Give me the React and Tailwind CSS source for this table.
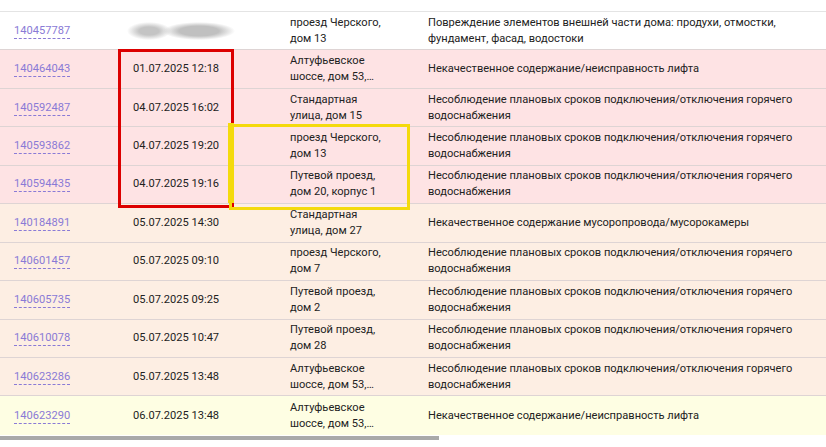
import React from "react";

const PINK = "bg-[#fee3e4]";
const PEACH = "bg-[#fdeee3]";
const LY = "bg-[#fefee3]";

const NS = ["Несоблюдение плановых сроков подключения/отключения горячего", "водоснабжения"];
const LIFT = ["Некачественное содержание/неисправность лифта"];

const rows = [
  { id: "140457787", date: null, addr: ["проезд Черского,", "дом 13"], desc: ["Повреждение элементов внешней части дома: продухи, отмостки,", "фундамент, фасад, водостоки"], bg: "bg-white" },
  { id: "140464043", date: "01.07.2025 12:18", addr: ["Алтуфьевское", "шоссе, дом 53,…"], desc: LIFT, bg: PINK },
  { id: "140592487", date: "04.07.2025 16:02", addr: ["Стандартная", "улица, дом 15"], desc: NS, bg: PINK },
  { id: "140593862", date: "04.07.2025 19:20", addr: ["проезд Черского,", "дом 13"], desc: NS, bg: PINK },
  { id: "140594435", date: "04.07.2025 19:16", addr: ["Путевой проезд,", "дом 20, корпус 1"], desc: NS, bg: PINK },
  { id: "140184891", date: "05.07.2025 14:30", addr: ["Стандартная", "улица, дом 27"], desc: ["Некачественное содержание мусоропровода/мусорокамеры"], bg: PEACH },
  { id: "140601457", date: "05.07.2025 09:10", addr: ["проезд Черского,", "дом 7"], desc: NS, bg: PEACH },
  { id: "140605735", date: "05.07.2025 09:25", addr: ["Путевой проезд,", "дом 2"], desc: NS, bg: PEACH },
  { id: "140610078", date: "05.07.2025 10:47", addr: ["Путевой проезд,", "дом 28"], desc: NS, bg: PEACH },
  { id: "140623286", date: "05.07.2025 13:48", addr: ["Алтуфьевское", "шоссе, дом 53,…"], desc: NS, bg: PEACH },
  { id: "140623290", date: "06.07.2025 13:48", addr: ["Алтуфьевское", "шоссе, дом 53,…"], desc: LIFT, bg: LY },
];

function Lines({ lines }) {
  return (
    <div className="flex flex-col">
      {lines.map((l, i) => (
        <span key={i} className="block whitespace-nowrap">{l}</span>
      ))}
    </div>
  );
}

export default function App() {
  return (
    <div
      className="relative w-[826px] h-[447px] overflow-hidden bg-white text-[11.1px] leading-[16px] text-[#222222]"
      style={{ fontFamily: "Roboto, 'Noto Sans', sans-serif" }}
    >
      <div className="h-[12px] border-b border-[#e4e4e4]" />
      {rows.map((r, i) => (
        <div
          key={r.id}
          className={`grid grid-cols-[119px_157px_138px_1fr] items-center h-[38.45px] ${r.bg} ${i < rows.length - 1 ? "border-b border-[#ded4d4]" : ""}`}
        >
          <div className="pl-[14px]">
            <span className="text-[#8a7ad6] border-b border-dashed border-[#8a7ad6] leading-[14px] inline-block">{r.id}</span>
          </div>
          <div className="pl-[14px]">
            {r.date ? (
              r.date
            ) : (
              <div className="ml-[-6px] flex items-center">
                <div className="h-[18px] w-[44px] bg-[radial-gradient(closest-side,#c4c4c4_45%,rgba(196,196,196,0)_100%)]" />
                <div className="ml-[-8px] h-[18px] w-[72px] bg-[radial-gradient(closest-side,#c0c0c0_55%,rgba(192,192,192,0)_100%)]" />
              </div>
            )}
          </div>
          <div className="pl-[14px]">
            <Lines lines={r.addr} />
          </div>
          <div className="pl-[14px]">
            <Lines lines={r.desc} />
          </div>
        </div>
      ))}
      <div className="mt-[1px] h-[4px] w-[439px] bg-[#a9a9a9]" />

      {/* highlight boxes */}
      <div className="absolute left-[118px] top-[49px] w-[116px] h-[159px] border-[3px] border-[#dc0000]" />
      <div className="absolute left-[229px] top-[124px] w-[181px] h-[86px] border-[3px] border-[#f4da0c]" />
      <div className="absolute left-[228px] top-[123px] w-[6px] h-[80px] bg-[#f4da0c]" />
    </div>
  );
}
